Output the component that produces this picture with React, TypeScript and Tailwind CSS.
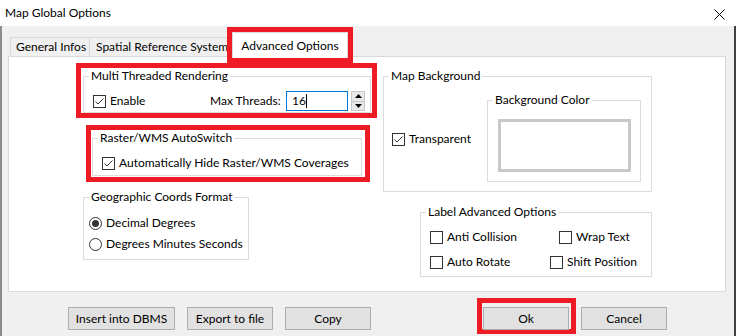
import React from 'react';

const font = { fontFamily: 'Lato, "Segoe UI", "Noto Sans", sans-serif' };

const CheckBox: React.FC<{ checked?: boolean; label: string }> = ({ checked, label }) => (
  <div className="flex items-center h-[16px]">
    <div className="w-[13px] h-[13px] border border-[#333333] bg-white flex items-center justify-center shrink-0">
      {checked && (
        <svg width="11" height="11" viewBox="0 0 11 11">
          <path d="M1.5 5.5 L4 8 L9.5 2.5" fill="none" stroke="#333333" strokeWidth="1" />
        </svg>
      )}
    </div>
    <span className="ml-[4px] whitespace-nowrap">{label}</span>
  </div>
);

const Radio: React.FC<{ checked?: boolean; label: string }> = ({ checked, label }) => (
  <div className="flex items-center h-[16px]">
    <div className="w-[13px] h-[13px] rounded-full border border-[#333333] bg-white flex items-center justify-center shrink-0">
      {checked && <div className="w-[7px] h-[7px] rounded-full bg-[#333333]" />}
    </div>
    <span className="ml-[4px] whitespace-nowrap">{label}</span>
  </div>
);

const GroupBox: React.FC<{ title: string; className?: string; children?: React.ReactNode }> = ({ title, className, children }) => (
  <fieldset className={`border border-[#dcdcdc] ${className || ''}`}>
    <legend className="ml-[5px] px-[2px] leading-[16px] whitespace-nowrap">{title}</legend>
    {children}
  </fieldset>
);

const WinButton: React.FC<{ label: string; className?: string }> = ({ label, className }) => (
  <div className={`h-[23px] bg-[#e1e1e1] border border-[#adadad] flex items-center justify-center ${className || ''}`}>
    {label}
  </div>
);

const App: React.FC = () => {
  return (
    <div className="w-[736px] h-[336px] flex flex-col text-[12px] text-black overflow-hidden" style={font}>
      {/* title bar */}
      <div className="h-[26px] bg-white flex items-center justify-between shrink-0">
        <span className="ml-[5px]">Map Global Options</span>
        <svg width="11" height="11" viewBox="0 0 11 11" className="mr-[11px] mt-[2px]">
          <path d="M0.5 0.5 L10.5 10.5 M10.5 0.5 L0.5 10.5" stroke="#000" strokeWidth="1" />
        </svg>
      </div>

      <div className="flex-1 bg-[#f0f0f0] border-l-2 border-l-[#8c8c8c] border-r-2 border-r-[#404040] flex flex-col">
        {/* tabs */}
        <div className="h-[30px] flex items-end pl-[8px] shrink-0">
          <div className="h-[19px] w-[80px] border border-b-0 border-[#d9d9d9] pl-[5px] flex items-center whitespace-nowrap">General Infos</div>
          <div className="h-[19px] w-[137px] border-t border-[#d9d9d9] pl-[6px] flex items-center whitespace-nowrap overflow-hidden">Spatial Reference System</div>
          <div className="self-start mt-[1px] h-[36px] w-[126px] border-[5px] border-[#ed1c24] relative z-10 shrink-0">
            <div className="h-[26px] bg-white border border-b-0 border-[#d9d9d9] flex items-center justify-center whitespace-nowrap">Advanced Options</div>
          </div>
        </div>

        {/* panel */}
        <div className="ml-[6px] w-[718px] h-[236px] bg-white border border-[#d9d9d9] flex pl-[67px] shrink-0">
          {/* left column */}
          <div className="w-[301px] flex flex-col">
            <div className="mt-[6px] h-[55px] border-[5px] border-[#ed1c24]">
              <GroupBox title="Multi Threaded Rendering" className="ml-[2px] w-[288px] h-[45px]">
                <div className="mt-[7px] pl-[9px] flex items-center h-[20px]">
                  <div className="w-[117px]"><CheckBox checked label="Enable" /></div>
                  <span className="w-[76px] whitespace-nowrap">Max Threads:</span>
                  <div className="w-[62px] h-[20px] border border-[#0078d7] bg-white flex items-center pl-[5px]">
                    <span>16</span>
                    <span className="w-[1px] h-[14px] bg-black" />
                  </div>
                  <div className="ml-[3px] w-[14px] h-[20px] flex flex-col border border-[#c8c8c8] bg-[#e8e8e8]">
                    <div className="flex-1 flex items-center justify-center border-b border-[#c8c8c8]">
                      <svg width="7" height="4" viewBox="0 0 7 4"><path d="M0 4 L3.5 0 L7 4 Z" fill="#000" /></svg>
                    </div>
                    <div className="flex-1 flex items-center justify-center">
                      <svg width="7" height="4" viewBox="0 0 7 4"><path d="M0 0 L3.5 4 L7 0 Z" fill="#000" /></svg>
                    </div>
                  </div>
                </div>
              </GroupBox>
            </div>

            <div className="mt-[7px] ml-[10px] w-[284px] h-[57px] border-[5px] border-[#ed1c24]">
              <GroupBox title="Raster/WMS AutoSwitch" className="ml-[1px] w-[270px] h-[46px]">
                <div className="mt-[9px] pl-[9px]">
                  <CheckBox checked label="Automatically Hide Raster/WMS Coverages" />
                </div>
              </GroupBox>
            </div>

            <GroupBox title="Geographic Coords Format" className="mt-[7px] ml-[7px] w-[166px] h-[71px]">
              <div className="mt-[10px] pl-[5px] flex flex-col gap-[5px]">
                <Radio checked label="Decimal Degrees" />
                <Radio label="Degrees Minutes Seconds" />
              </div>
            </GroupBox>
          </div>

          {/* right column */}
          <div className="ml-[6px] w-[269px] flex flex-col">
            <GroupBox title="Map Background" className="mt-[11px] w-[269px] h-[124px]">
              <div className="flex">
                <div className="w-[103px] pl-[8px] pt-[47px]">
                  <CheckBox checked label="Transparent" />
                </div>
                <GroupBox title="Background Color" className="mt-[8px] w-[154px] h-[90px]">
                  <div className="mt-[11px] ml-[10px] w-[133px] h-[53px] border-[3px] border-[#c8c8c8] bg-white" />
                </GroupBox>
              </div>
            </GroupBox>

            <GroupBox title="Label Advanced Options" className="mt-[12px] ml-[37px] w-[232px] h-[73px]">
              <div className="mt-[9px] pl-[9px] flex flex-col gap-[9px]">
                <div className="flex">
                  <div className="w-[129px]"><CheckBox label="Anti Collision" /></div>
                  <CheckBox label="Wrap Text" />
                </div>
                <div className="flex">
                  <div className="w-[120px]"><CheckBox label="Auto Rotate" /></div>
                  <CheckBox label="Shift Position" />
                </div>
              </div>
            </GroupBox>
          </div>
        </div>

        {/* buttons */}
        <div className="mt-[6px] flex items-start">
          <WinButton label="Insert into DBMS" className="mt-[9px] ml-[66px] w-[107px]" />
          <WinButton label="Export to file" className="mt-[9px] ml-[12px] w-[86px]" />
          <WinButton label="Copy" className="mt-[9px] ml-[12px] w-[86px]" />
          <div className="ml-[106px] w-[99px] h-[36px] border-[5px] border-[#ed1c24] pt-[4px] pl-[1px]">
            <WinButton label="Ok" className="w-[86px] h-[22px]" />
          </div>
          <WinButton label="Cancel" className="mt-[9px] ml-[5px] w-[86px]" />
        </div>
      </div>
    </div>
  );
};

export default App;
